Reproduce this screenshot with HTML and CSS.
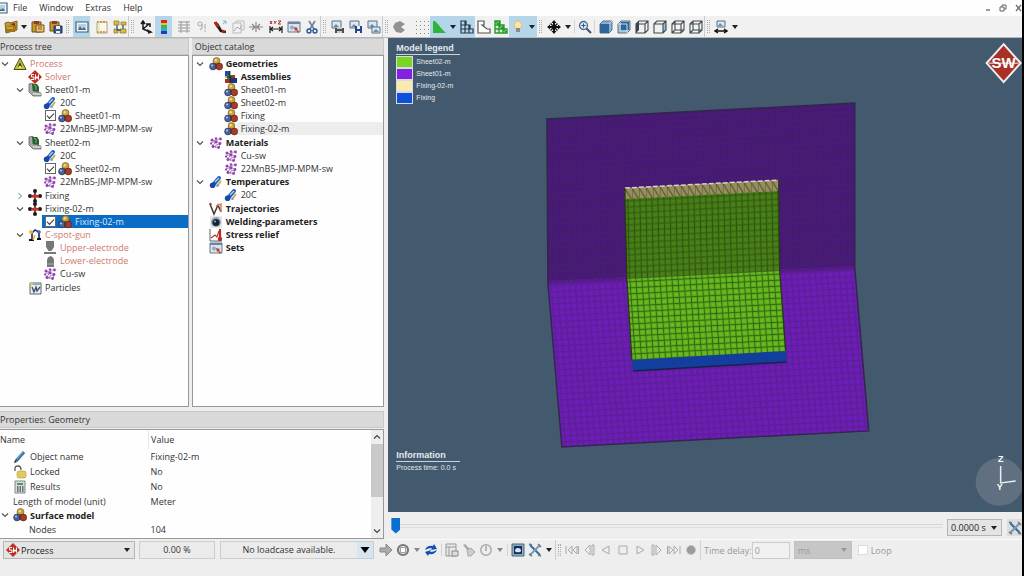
FILE: index.html
```html
<!DOCTYPE html>
<html lang="en">
<head>
<meta charset="utf-8">
<title>Process editor</title>
<link rel="stylesheet" href="styles.css">
</head>
<body>
<svg class="defs" aria-hidden="true">
  <symbol id="geo" viewBox="0 0 14 14"><circle cx="7.5" cy="4" r="3.5" fill="#c9a23a" stroke="#6d5520" stroke-width=".6"/><circle cx="4" cy="9.5" r="3.4" fill="#48629a" stroke="#222b50" stroke-width=".6"/><circle cx="10.3" cy="9.5" r="3.4" fill="#a93a28" stroke="#551a14" stroke-width=".6"/><circle cx="6.8" cy="3.2" r="1.2" fill="#f2dc8a"/><circle cx="3" cy="8.5" r="1.1" fill="#a9c3ec"/><path d="M7 6v6" stroke="#333" stroke-width=".8"/></symbol>
  <symbol id="mat" viewBox="0 0 14 14"><path d="M3 4l4 1 4-3M4 10l3-5 4 3-1 4-6-2-2-3 5-2M6 12l1-3 4-1" stroke="#8a6ba8" fill="none" stroke-width=".8"/><g fill="#9c3fb4"><circle cx="3" cy="4" r="1.5"/><circle cx="7" cy="2.6" r="1.3"/><circle cx="11.5" cy="3" r="1.4"/><circle cx="2" cy="7.5" r="1.1"/><circle cx="7" cy="6" r="1.5"/><circle cx="11" cy="7.5" r="1.4"/><circle cx="4" cy="10.5" r="1.5"/><circle cx="9.5" cy="11.5" r="1.4"/></g></symbol>
  <symbol id="temp" viewBox="0 0 14 14"><path d="M4 10L10 3" stroke="#1d58b5" stroke-width="4" stroke-linecap="round"/><circle cx="3.6" cy="10.3" r="2.8" fill="#174a9f"/><path d="M6 7l4-4" stroke="#a8d4f5" stroke-width="1.4"/><path d="M9 10l3-4" stroke="#dda93a" stroke-width="2"/><circle cx="8.5" cy="10.5" r="1.5" fill="#7ca3d9"/></symbol>
  <symbol id="fix" viewBox="0 0 14 14"><path d="M7 3v8M3 7h8" stroke="#1b1b1b" stroke-width="1.500"/><g fill="#1b1b1b"><circle cx="7" cy="2" r="2"/><circle cx="7" cy="12" r="2"/><circle cx="2" cy="7" r="2"/><circle cx="12" cy="7" r="2"/></g><path d="M3 7.500h8" stroke="#cc3322" stroke-width="2.200"/><circle cx="7" cy="7" r="2" fill="#cc3322"/></symbol>
  <symbol id="cross" viewBox="0 0 14 14"><path d="M7 0l2.500 3H8v3h3V4.500L14 7l-3 2.500V8H8v3h1.500L7 14l-2.500-3H6V8H3v1.500L0 7l3-2.500V6h3V3H4.500z" fill="#111"/><path d="M3.500 3.500l7 7M10.500 3.500l-7 7" stroke="#111" stroke-width="1.300"/></symbol>
  <symbol id="sheet" viewBox="0 0 14 14"><path d="M1 1l4-1v8l8 2v3H5L1 9z" fill="#a9aaa8" stroke="#555" stroke-width=".7"/><path d="M4 1h5l2 3v5l-6-1z" fill="#285e32"/><path d="M6 2l2 1v4" stroke="#77b86e" fill="none"/><path d="M5 11h8" stroke="#eee"/></symbol>
  <symbol id="warn" viewBox="0 0 14 14"><path d="M7 1l6 11.500H1z" fill="#bfc53a" stroke="#4a501b" stroke-width="1"/><path d="M7 5l2 5H5z" fill="#303812"/><circle cx="7" cy="10" r="1.300" fill="#eef06d"/></symbol>
  <symbol id="solver" viewBox="0 0 14 14"><path d="M7 0l7 7-7 7-7-7z" fill="#bd2f25"/><path d="M6 4.500H3.500V7H6v2.500H3M7.500 4.500V9.500l1.500-3 1.500 3V4.500" fill="none" stroke="#fff" stroke-width="1"/></symbol>
  <symbol id="gun" viewBox="0 0 14 14"><path d="M4 11V5l3-3 4 2v6" fill="none" stroke="#1b3477" stroke-width="1.700"/><circle cx="3" cy="4" r="2" fill="#e6bb32"/><path d="M1 12h5M9 11h4" stroke="#111" stroke-width="2"/><circle cx="11" cy="4" r="1.800" fill="#3f68b3"/><path d="M5 12l2-5" stroke="#e6bb32" stroke-width="1.500"/></symbol>
  <symbol id="elup" viewBox="0 0 14 14"><path d="M3 0h8v6L8.500 10h-3L3 6z" fill="#777"/><path d="M1 12h12" stroke="#777" stroke-width="2"/></symbol>
  <symbol id="ello" viewBox="0 0 14 14"><path d="M4 13V7q0-4 3.500-5Q11 3 11 7v6z" fill="#777"/><path d="M4 10h7" stroke="#bbb" stroke-width=".8"/></symbol>
  <symbol id="part" viewBox="0 0 14 14"><path d="M2 2h11v11H2z" fill="#e8eef3" stroke="#5c6570"/><path d="M3 3h9" stroke="#9aabb8" stroke-width="2"/><path d="M4 6l2 5 2-5 1 4 3-4" stroke="#354d68" fill="none" stroke-width="1.300"/><circle cx="3.500" cy="3" r="1.500" fill="#e1c65c"/></symbol>
  <symbol id="asm" viewBox="0 0 14 14"><path d="M1 1h5v5H1z" fill="#1f4aa5"/><path d="M3 5h5v5H3z" fill="#278d32"/><path d="M1 9h5v4H1zM8 5h3v4H8z" fill="#b02b22"/><path d="M6 8h7v5H6z" fill="#183879"/><path d="M1 7h7M6 1v12" stroke="#111" stroke-width=".7"/></symbol>
  <symbol id="traj" viewBox="0 0 14 14"><path d="M1 2l4 10 4-9 3 7" stroke="#493333" fill="none" stroke-width="1.500"/><path d="M7 4l5-2v8" stroke="#d77b62" fill="none" stroke-width="1.500"/><circle cx="1.500" cy="2" r="1.200" fill="#b0372b"/></symbol>
  <symbol id="weld" viewBox="0 0 14 14"><path d="M1 1h12v12H1z" fill="#e5e7e9"/><circle cx="7" cy="7" r="5" fill="#9aa4ad"/><circle cx="7" cy="7.500" r="3.600" fill="#172338"/><circle cx="6" cy="6.500" r="1" fill="#9bb4d1"/></symbol>
  <symbol id="stress" viewBox="0 0 14 14"><path d="M1 1v12h12" fill="none" stroke="#596173"/><path d="M2 10l4-3 2 2 2-6" stroke="#c03525" fill="none" stroke-width="1.200"/><path d="M11 1v9" stroke="#b52a23" stroke-width="2.200"/><circle cx="11" cy="11" r="2.200" fill="#b52a23"/></symbol>
  <symbol id="sets" viewBox="0 0 14 14"><path d="M1 2h12v10H1z" fill="#dbe4ec" stroke="#60788f"/><path d="M1 3h12" stroke="#6886a5" stroke-width="2"/><circle cx="5" cy="7.500" r="2" fill="#93abc2"/><path d="M7 7l4 1-1 1 2 3-1 1-2-3-1 1z" fill="#bf3d2c"/></symbol>
  <symbol id="pencil" viewBox="0 0 14 14"><path d="M3 11L11 2" stroke="#356f9e" stroke-width="3.200"/><path d="M4 9l6-7" stroke="#84bde2"/><path d="M1 13l1-3 2 2z" fill="#222"/></symbol>
  <symbol id="lock" viewBox="0 0 14 14"><path d="M2 6V3q0-2 3-2t3 4" fill="none" stroke="#555" stroke-width="1.300"/><rect x="4" y="6" width="9" height="7" rx="2" fill="#ddca62" stroke="#b69c37" stroke-width=".6"/></symbol>
  <symbol id="calc" viewBox="0 0 14 14"><path d="M2 1h10v12H2z" fill="#d8dfd9" stroke="#7c8882"/><path d="M4 3h6v2H4z" fill="#5c8a6d"/><path d="M4 7h1.500M6.500 7H8M9 7h1.500M4 9h1.500M6.500 9H8M9 9h1.500M4 11h1.500M6.500 11H8M9 11h1.500" stroke="#40546a" stroke-width="1.300"/></symbol>
  <symbol id="tick" viewBox="0 0 8 8"><path d="M1 2.500l3 3 3-3" fill="none" stroke="currentColor" stroke-width="1.200"/></symbol>
  <symbol id="tickr" viewBox="0 0 8 8"><path d="M2.500 1l3 3-3 3" fill="none" stroke="#aaa" stroke-width="1.200"/></symbol>
  <symbol id="tri" viewBox="0 0 8 8"><path d="M1 2h6L4 6z" fill="currentColor"/></symbol>
  <symbol id="folder" viewBox="0 0 14 14"><path d="M1 3l4-1 1 1 7-2v9l-11 3z" fill="#c69a27" stroke="#665016" stroke-width=".8"/><path d="M1 12l2-6 10-1-2 7z" fill="#a17818"/><path d="M6 4l5-1v3z" fill="#832d1c"/><path d="M3 8h6" stroke="#ead272"/></symbol>
  <symbol id="clip" viewBox="0 0 14 14"><path d="M1 2h9v10H1z" fill="#c69a27" stroke="#665016"/><path d="M3 1h5v3H3z" fill="#9a3a25"/><path d="M5 5h8v7H5z" fill="#e7c86b" stroke="#755018"/><path d="M7 7h4M7 9h4" stroke="#855"/></symbol>
  <symbol id="clips" viewBox="0 0 14 14"><path d="M1 2h9v9H1z" fill="#c69a27" stroke="#665016"/><path d="M3 1h5v3H3z" fill="#9a3a25"/><path d="M5 6h8v7H5z" fill="#37598a" stroke="#203558"/><path d="M7 6h4v3H7zM7 11h4v2H7z" fill="#e9eef5"/></symbol>
  <symbol id="pic" viewBox="0 0 14 14"><path d="M1 2h12v10H1z" fill="#eef4f8" stroke="#40627c" stroke-width="1.200"/><path d="M3 4h8v6H3z" fill="#b9d0e1"/><path d="M3 10l2-4 2 3 2-2 2 3z" fill="#466a88"/></symbol>
  <symbol id="note" viewBox="0 0 14 14"><path d="M2 2h10v11H2z" fill="#f9f7ee" stroke="#aaa391"/><path d="M2 2h10M2 12h10" stroke="#d79c3d" stroke-width="2" stroke-dasharray="2 1"/><path d="M4 2v10" stroke="#dda"/></symbol>
  <symbol id="tree" viewBox="0 0 14 14"><path d="M1 1h5v4H1zM8 2h5v3H8zM7 9h6v4H7zM1 9h4v4H1z" fill="#dfba36" stroke="#8b761f" stroke-width=".7"/><path d="M4 5v5h4M10 5v4" stroke="#2d5a83" fill="none" stroke-width="1.300"/></symbol>
  <symbol id="axes" viewBox="0 0 14 14"><path d="M4 2v7l7 3M4 9l6-5M2 4l2-3 2 3M8 10l4 2-3 1M7 4h4v3" fill="none" stroke="#1b1b1b" stroke-width="1.500"/></symbol>
  <symbol id="scale" viewBox="0 0 14 14"><path d="M4 0h6v3H4z" fill="#d22"/><path d="M4 3h6v2H4z" fill="#eec22c"/><path d="M4 5h6v3H4z" fill="#38b74c"/><path d="M4 8h6v3H4z" fill="#32a9cc"/><path d="M4 11h6v3H4z" fill="#253da5"/></symbol>
  <symbol id="lines" viewBox="0 0 14 14"><path d="M1 2h12M1 5h12M1 8h12M1 11h12M4 1v12M10 1v12" stroke="#999"/></symbol>
  <symbol id="nine" viewBox="0 0 14 14"><g fill="none" stroke="#b3b3b3" stroke-width="1.200"><circle cx="5" cy="4" r="2"/><path d="M7 4v4L5 10M10 4v5M9 11h2"/></g></symbol>
  <symbol id="torch" viewBox="0 0 14 14"><path d="M1 2l4 1 4 7 4 1v2L7 12 3 6z" fill="#1d1d1d"/><path d="M2 2l3 5M9 11l3 1" stroke="#b4231b" stroke-width="3"/><path d="M10 4l3-3M10 1h3v3" stroke="#7fb5dc" fill="none"/></symbol>
  <symbol id="chart" viewBox="0 0 14 14"><path d="M2 3h8v10H2zM5 3V1h8v9h-3" fill="none" stroke="#bbb"/><path d="M3 11l3-4 3 2 2-4" fill="none" stroke="#aaa"/></symbol>
  <symbol id="pin" viewBox="0 0 14 14"><path d="M0 7h14M7 2v10M3 4l3 3-3 3M11 4L8 7l3 3" fill="none" stroke="#888" stroke-width="1.200"/></symbol>
  <symbol id="xyz" viewBox="0 0 14 14"><path d="M1 6v7M13 6v7M1 9h12M4 7L1.500 9 4 11M10 7l2.500 2L10 11" fill="none" stroke="#222" stroke-width="1.200"/><path d="M1 1l2 3M3 1L1 4M5 1l1 1.500L7.500 1M6 2v2M9 1h3L9 4h3" stroke="#b22b28" fill="none"/></symbol>
  <symbol id="cut" viewBox="0 0 14 14"><path d="M4 1l5 8M10 1L5 9" stroke="#6b8299" stroke-width="1.600"/><circle cx="4" cy="11" r="2" fill="none" stroke="#245696" stroke-width="1.400"/><circle cx="10" cy="11" r="2" fill="none" stroke="#245696" stroke-width="1.400"/></symbol>
  <symbol id="pics" viewBox="0 0 14 14"><path d="M1 1h9v7H1z" fill="#dce7ef" stroke="#547087"/><path d="M2 7l3-3 3 3" fill="#6c8ba4"/><path d="M5 7h8v6H5z" fill="#dce7ef" stroke="#547087"/><path d="M6 12l3-3 3 3" fill="#6c8ba4"/></symbol>
  <symbol id="picprint" viewBox="0 0 14 14"><path d="M1 1h9v7H1z" fill="#dce7ef" stroke="#547087"/><path d="M2 7l3-3 3 3" fill="#6c8ba4"/><path d="M4 8h9v5H4z" fill="#484f50"/><path d="M6 7h5v2H6zM6 11h5v2H6z" fill="#c7cccb"/></symbol>
  <symbol id="picsave" viewBox="0 0 14 14"><path d="M1 1h9v7H1z" fill="#dce7ef" stroke="#547087"/><path d="M2 7l3-3 3 3" fill="#6c8ba4"/><path d="M6 6h7v7H6z" fill="#28468a"/><path d="M8 6h3v3H8zM8 11h3v2H8z" fill="#eef"/></symbol>
  <symbol id="ball" viewBox="0 0 14 14"><path d="M8 1L3 3 1 7l3 5 5 1 4-3-4-3 4-3z" fill="#929292"/></symbol>
  <symbol id="dots" viewBox="0 0 14 14"><path d="M1 1.500h13M1 5.500h13M1 9.500h13M1 13.500h13" stroke="#888" stroke-dasharray="1 3"/></symbol>
  <symbol id="hill" viewBox="0 0 14 14"><path d="M1 13V1h2l3 3 3 4 5 5z" fill="#2eb43a"/></symbol>
  <symbol id="grid" viewBox="0 0 14 14"><path d="M1 1h5v4h4v4h3v4H1zM1 5h5M1 9h9M5 1v12M9 5v8" fill="none" stroke="#273a48" stroke-width="1.200"/></symbol>
  <symbol id="outline" viewBox="0 0 14 14"><path d="M1 1h6v4H5l5 4h3v4H1z" fill="#fff" stroke="#555" stroke-width="1.200"/></symbol>
  <symbol id="ggrid" viewBox="0 0 14 14"><path d="M1 1h5v4h4v4h3v4H1z" fill="#d9f0d7"/><path d="M1 1h5v4h4v4h3v4H1zM1 5h5M1 9h9M5 1v12M9 5v8M1 1l12 12" fill="none" stroke="#259a2c" stroke-width="1.400"/></symbol>
  <symbol id="bulb" viewBox="0 0 14 14"><circle cx="7" cy="5" r="4" fill="#f4e7a8" stroke="#cbb66c" stroke-width=".7"/><path d="M5 8h4v4H5z" fill="#8f8980"/></symbol>
  <symbol id="zoom" viewBox="0 0 14 14"><circle cx="5.500" cy="5.500" r="4" fill="#d7e7f4" stroke="#4d6d8c" stroke-width="1.300"/><path d="M8.500 8.500l4.500 4.500" stroke="#405970" stroke-width="2.200"/><path d="M3.500 5.500h4M5.500 3.500v4" stroke="#27558a"/></symbol>
  <symbol id="cubea" viewBox="0 0 14 14"><path d="M1 4l3-3h9v9l-3 3H1z" fill="#86b1d4" stroke="#5d7181"/><path d="M1 4h9v9H1z" fill="#2d6499"/><path d="M10 4l3-3" stroke="#ddd"/></symbol>
  <symbol id="cubeb" viewBox="0 0 14 14"><path d="M1 4l3-3h9v9l-3 3H1z" fill="#a7c4da" stroke="#5d7181"/><path d="M4 2h8v8H4z" fill="#2d6499"/><path d="M1 4h9v9" fill="none" stroke="#cde"/></symbol>
  <symbol id="cube" viewBox="0 0 14 14"><path d="M1 4l3-3h9v9l-3 3H1zM1 4h9v9M10 4l3-3M4 1v9h9M1 13l3-3" fill="#f5f7f8" fill-opacity=".7" stroke="#3f484d" stroke-width="1.100"/></symbol>
  <symbol id="cubel" viewBox="0 0 14 14"><path d="M1 4l3-3v9l-3 3z" fill="#345"/><path d="M1 4l3-3h9v9l-3 3H1zM1 4h9v9M10 4l3-3" fill="none" stroke="#3f484d" stroke-width="1.100"/></symbol>
  <symbol id="cuber" viewBox="0 0 14 14"><path d="M10 4l3-3v9l-3 3z" fill="#91bddd"/><path d="M1 4l3-3h9v9l-3 3H1zM1 4h9v9M10 4l3-3" fill="none" stroke="#3f484d" stroke-width="1.100"/></symbol>
  <symbol id="measure" viewBox="0 0 14 14"><path d="M3 1h8v6H3z" fill="#dce7ef" stroke="#547087"/><path d="M4 6l2-3 3 3" fill="#6c8ba4"/><path d="M1 11h12M4 9l-3 2 3 2M10 9l3 2-3 2" stroke="#111" fill="none" stroke-width="1.400"/></symbol>
  <symbol id="go" viewBox="0 0 14 14"><path d="M1 5h6V1l6 6-6 6V9H1z" fill="#aaa" stroke="#888"/></symbol>
  <symbol id="halt" viewBox="0 0 14 14"><circle cx="7" cy="7" r="5" fill="#eee" stroke="#777" stroke-width="2.200"/><path d="M4.500 4.500h5v5h-5z" fill="#fff" stroke="#888" stroke-width=".8"/></symbol>
  <symbol id="sync" viewBox="0 0 14 14"><path d="M1 7q2-5 8-4l1-2 3 5-6 1 1-2Q4 5 1 7zM13 7q-2 5-8 4l-1 2-3-4 6-2-1 2q4 0 7-2z" fill="#164db0"/></symbol>
  <symbol id="form" viewBox="0 0 14 14"><path d="M1 1h10v12H1zM1 4h10M4 4v9" fill="#e8e8e8" stroke="#999"/><path d="M7 8h6v5H7z" fill="#ddd" stroke="#888"/></symbol>
  <symbol id="brush" viewBox="0 0 14 14"><path d="M1 2l2-1 5 5-2 2z" fill="#aaa"/><path d="M5 7l4-2 4 4-4 4H6z" fill="#ccc" stroke="#aaa"/></symbol>
  <symbol id="clock" viewBox="0 0 14 14"><circle cx="7" cy="7" r="5.200" fill="none" stroke="#aaa" stroke-width="1.500"/><path d="M7 3v5" stroke="#999" stroke-width="1.300"/></symbol>
  <symbol id="screen" viewBox="0 0 14 14"><path d="M1 1h12v12H1z" fill="#8fabc0" stroke="#49667c"/><path d="M3 3h8v8H3z" fill="#0f315d"/><path d="M4 8q0-3 3-3 3 0 3 3-1 2-3 1-2 1-3-1" fill="#d9e7f0"/></symbol>
  <symbol id="tools" viewBox="0 0 14 14"><path d="M2 2l10 10" stroke="#37699d" stroke-width="2"/><path d="M12 2L2 12" stroke="#7d99b0" stroke-width="2"/><path d="M1 1l3 1M10 1l3 3M1 11l3 2M10 12l3 1" stroke="#667f93" stroke-width="1.600"/></symbol>
  <symbol id="first" viewBox="0 0 14 14"><path d="M1 3v8M7 3L3 7l4 4zM12 3L8 7l4 4zM13.500 3v8" fill="none" stroke="#aaa"/></symbol>
  <symbol id="last" viewBox="0 0 14 14"><path d="M13 3v8M7 3l4 4-4 4zM2 3l4 4-4 4zM.5 3v8" fill="none" stroke="#aaa"/></symbol>
  <symbol id="stepb" viewBox="0 0 14 14"><path d="M8 2L3 7l5 5zM10 2h2v10h-2z" fill="none" stroke="#aaa"/></symbol>
  <symbol id="stepf" viewBox="0 0 14 14"><path d="M6 2l5 5-5 5zM2 2h2v10H2z" fill="none" stroke="#aaa"/></symbol>
  <symbol id="back" viewBox="0 0 14 14"><path d="M10 3L3 7l7 4z" fill="none" stroke="#aaa"/></symbol>
  <symbol id="play" viewBox="0 0 14 14"><path d="M4 3l7 4-7 4z" fill="none" stroke="#aaa"/></symbol>
  <symbol id="stop" viewBox="0 0 14 14"><path d="M3 3h8v8H3z" fill="none" stroke="#aaa"/></symbol>
  <symbol id="rec" viewBox="0 0 14 14"><circle cx="7" cy="7" r="4.500" fill="#9b9b9b" stroke="#c5c5c5"/></symbol>
</svg>

<div class="app">
  <header class="menubar">
    <svg class="ico"><use href="#pic"/></svg>
    <nav class="menus"><button>File</button><button>Window</button><button>Extras</button><button>Help</button></nav>
    <div class="winbtns">
      <button aria-label="Minimize"><svg viewBox="0 0 8 8"><path d="M2 6h4" stroke="#666" stroke-width="1.300"/></svg></button>
      <button aria-label="Restore"><svg viewBox="0 0 8 8"><path d="M1 3h4v4H1zM3 3V1h4v4H5" fill="none" stroke="#666"/></svg></button>
      <button aria-label="Close"><svg viewBox="0 0 8 8"><path d="M2 1l5 6M7 1L2 7" stroke="#666" stroke-width="1.200"/></svg></button>
    </div>
  </header>

  <div class="toolbar" role="toolbar" aria-label="Main tools">
    <div class="group wide first">
      <button class="tb" aria-label="Open"><svg class="ico"><use href="#folder"/></svg></button><button class="dd" aria-label="Open menu"><svg><use href="#tri"/></svg></button>
      <button class="tb" aria-label="Import"><svg class="ico"><use href="#clip"/></svg></button><button class="tb" aria-label="Save"><svg class="ico"><use href="#clips"/></svg></button>
    </div>
    <div class="group wide grip">
      <button class="tb on" aria-label="Picture"><svg class="ico"><use href="#pic"/></svg></button><i class="space"></i>
      <button class="tb" aria-label="Notes"><svg class="ico"><use href="#note"/></svg></button><button class="tb" aria-label="Structure"><svg class="ico"><use href="#tree"/></svg></button>
    </div>
    <div class="group wide grip bar">
      <button class="tb" aria-label="Axes"><svg class="ico"><use href="#axes"/></svg></button><button class="tb on" aria-label="Colour scale"><svg class="ico"><use href="#scale"/></svg></button><i class="space"></i>
      <button class="tb" aria-label="Lines"><svg class="ico"><use href="#lines"/></svg></button><button class="tb" aria-label="Numbers"><svg class="ico"><use href="#nine"/></svg></button>
      <button class="tb" aria-label="Torch"><svg class="ico"><use href="#torch"/></svg></button><button class="tb" aria-label="Chart"><svg class="ico"><use href="#chart"/></svg></button>
      <button class="tb" aria-label="Pin"><svg class="ico"><use href="#pin"/></svg></button><i class="space"></i>
      <button class="tb" aria-label="Coordinates"><svg class="ico"><use href="#xyz"/></svg></button><button class="tb" aria-label="Select"><svg class="ico"><use href="#sets"/></svg></button><button class="tb" aria-label="Cut"><svg class="ico"><use href="#cut"/></svg></button>
    </div>
    <div class="group wide grip bar">
      <button class="tb" aria-label="Print view"><svg class="ico"><use href="#picprint"/></svg></button><button class="tb" aria-label="Save view"><svg class="ico"><use href="#picsave"/></svg></button><button class="tb" aria-label="Copy view"><svg class="ico"><use href="#pics"/></svg></button>
    </div>
    <div class="group grip bar">
      <button class="tb" aria-label="Solid"><svg class="ico"><use href="#ball"/></svg></button><i class="space far"></i>
      <button class="tb" aria-label="Points"><svg class="ico"><use href="#dots"/></svg></button>
      <button class="tb on" aria-label="Surface"><svg class="ico"><use href="#hill"/></svg></button><button class="dd on" aria-label="Surface menu"><svg><use href="#tri"/></svg></button>
      <button class="tb on" aria-label="Mesh"><svg class="ico"><use href="#grid"/></svg></button><button class="tb" aria-label="Outline"><svg class="ico"><use href="#outline"/></svg></button><button class="tb" aria-label="Elements"><svg class="ico"><use href="#ggrid"/></svg></button>
      <button class="tb on" aria-label="Light"><svg class="ico"><use href="#bulb"/></svg></button><button class="dd on" aria-label="Light menu"><svg><use href="#tri"/></svg></button>
    </div>
    <div class="group grip">
      <button class="tb" aria-label="Move"><svg class="ico"><use href="#cross"/></svg></button><button class="dd" aria-label="Move menu"><svg><use href="#tri"/></svg></button>
    </div>
    <div class="group line"><button class="tb" aria-label="Zoom"><svg class="ico"><use href="#zoom"/></svg></button></div>
    <div class="group wide line">
      <button class="tb" aria-label="Front view"><svg class="ico"><use href="#cubea"/></svg></button><button class="tb" aria-label="Back view"><svg class="ico"><use href="#cubeb"/></svg></button><button class="tb" aria-label="Left view"><svg class="ico"><use href="#cubel"/></svg></button><button class="tb" aria-label="Right view"><svg class="ico"><use href="#cuber"/></svg></button><button class="tb" aria-label="Top view"><svg class="ico"><use href="#cube"/></svg></button><button class="tb" aria-label="Bottom view"><svg class="ico"><use href="#cube"/></svg></button>
    </div>
    <div class="group grip bar"><button class="tb" aria-label="Measure"><svg class="ico"><use href="#measure"/></svg></button><button class="dd" aria-label="Measure menu"><svg><use href="#tri"/></svg></button></div>
  </div>

  <main class="work">
    <div class="side">
      <div class="panes">
        <section class="pane">
          <h2>Process tree</h2>
          <div class="box">
            <ul class="tree">
              <li><div class="row"><button class="tw" aria-label="Toggle"><svg><use href="#tick"/></svg></button><span class="item err"><svg class="ico"><use href="#warn"/></svg>Process</span></div>
                <ul>
                  <li><div class="row"><i class="tw"></i><span class="item err"><svg class="ico"><use href="#solver"/></svg>Solver</span></div></li>
                  <li><div class="row"><button class="tw" aria-label="Toggle"><svg><use href="#tick"/></svg></button><span class="item"><svg class="ico"><use href="#sheet"/></svg>Sheet01-m</span></div>
                    <ul>
                      <li><div class="row"><i class="tw"></i><span class="item"><svg class="ico"><use href="#temp"/></svg>20C</span></div></li>
                      <li><div class="row"><i class="tw"></i><label class="item"><input type="checkbox" checked><svg class="ico"><use href="#geo"/></svg>Sheet01-m</label></div></li>
                      <li><div class="row"><i class="tw"></i><span class="item"><svg class="ico"><use href="#mat"/></svg>22MnB5-JMP-MPM-sw</span></div></li>
                    </ul></li>
                  <li class="part"><div class="row"><button class="tw" aria-label="Toggle"><svg><use href="#tick"/></svg></button><span class="item"><svg class="ico"><use href="#sheet"/></svg>Sheet02-m</span></div>
                    <ul>
                      <li><div class="row"><i class="tw"></i><span class="item"><svg class="ico"><use href="#temp"/></svg>20C</span></div></li>
                      <li><div class="row"><i class="tw"></i><label class="item"><input type="checkbox" checked><svg class="ico"><use href="#geo"/></svg>Sheet02-m</label></div></li>
                      <li><div class="row"><i class="tw"></i><span class="item"><svg class="ico"><use href="#mat"/></svg>22MnB5-JMP-MPM-sw</span></div></li>
                    </ul></li>
                  <li class="part"><div class="row"><button class="tw" aria-label="Toggle"><svg><use href="#tickr"/></svg></button><span class="item"><svg class="ico"><use href="#fix"/></svg>Fixing</span></div></li>
                  <li><div class="row"><button class="tw" aria-label="Toggle"><svg><use href="#tick"/></svg></button><span class="item"><svg class="ico"><use href="#fix"/></svg>Fixing-02-m</span></div>
                    <ul><li><div class="row"><i class="tw"></i><label class="item sel"><input type="checkbox" checked><svg class="ico"><use href="#geo"/></svg>Fixing-02-m</label></div></li></ul></li>
                  <li><div class="row"><button class="tw" aria-label="Toggle"><svg><use href="#tick"/></svg></button><span class="item err"><svg class="ico"><use href="#gun"/></svg>C-spot-gun</span></div>
                    <ul>
                      <li><div class="row"><i class="tw"></i><span class="item err"><svg class="ico"><use href="#elup"/></svg>Upper-electrode</span></div></li>
                      <li><div class="row"><i class="tw"></i><span class="item err"><svg class="ico"><use href="#ello"/></svg>Lower-electrode</span></div></li>
                      <li><div class="row"><i class="tw"></i><span class="item"><svg class="ico"><use href="#mat"/></svg>Cu-sw</span></div></li>
                    </ul></li>
                  <li class="part"><div class="row"><i class="tw"></i><span class="item"><svg class="ico"><use href="#part"/></svg>Particles</span></div></li>
                </ul></li>
            </ul>
          </div>
        </section>
        <section class="pane">
          <h2>Object catalog</h2>
          <div class="box catalog">
            <ul class="tree">
              <li><div class="row"><button class="tw" aria-label="Toggle"><svg><use href="#tick"/></svg></button><b class="item"><svg class="ico"><use href="#geo"/></svg>Geometries</b></div>
                <ul>
                  <li><div class="row"><i class="tw"></i><b class="item"><svg class="ico"><use href="#asm"/></svg>Assemblies</b></div></li>
                  <li><div class="row"><i class="tw"></i><span class="item"><svg class="ico"><use href="#geo"/></svg>Sheet01-m</span></div></li>
                  <li><div class="row"><i class="tw"></i><span class="item"><svg class="ico"><use href="#geo"/></svg>Sheet02-m</span></div></li>
                  <li><div class="row"><i class="tw"></i><span class="item"><svg class="ico"><use href="#geo"/></svg>Fixing</span></div></li>
                  <li><div class="row"><i class="tw"></i><span class="item cur"><svg class="ico"><use href="#geo"/></svg>Fixing-02-m</span></div></li>
                </ul></li>
              <li class="part"><div class="row"><button class="tw" aria-label="Toggle"><svg><use href="#tick"/></svg></button><b class="item"><svg class="ico"><use href="#mat"/></svg>Materials</b></div>
                <ul>
                  <li><div class="row"><i class="tw"></i><span class="item"><svg class="ico"><use href="#mat"/></svg>Cu-sw</span></div></li>
                  <li><div class="row"><i class="tw"></i><span class="item"><svg class="ico"><use href="#mat"/></svg>22MnB5-JMP-MPM-sw</span></div></li>
                </ul></li>
              <li><div class="row"><button class="tw" aria-label="Toggle"><svg><use href="#tick"/></svg></button><b class="item"><svg class="ico"><use href="#temp"/></svg>Temperatures</b></div>
                <ul><li><div class="row"><i class="tw"></i><span class="item"><svg class="ico"><use href="#temp"/></svg>20C</span></div></li></ul></li>
              <li class="part"><div class="row"><i class="tw"></i><b class="item"><svg class="ico"><use href="#traj"/></svg>Trajectories</b></div></li>
              <li><div class="row"><i class="tw"></i><b class="item"><svg class="ico"><use href="#weld"/></svg>Welding-parameters</b></div></li>
              <li><div class="row"><i class="tw"></i><b class="item"><svg class="ico"><use href="#stress"/></svg>Stress relief</b></div></li>
              <li><div class="row"><i class="tw"></i><b class="item"><svg class="ico"><use href="#sets"/></svg>Sets</b></div></li>
            </ul>
          </div>
        </section>
      </div>
      <section class="pane props">
        <h2>Properties: Geometry</h2>
        <div class="box proprow">
          <table>
            <thead><tr><th>Name</th><th>Value</th></tr></thead>
            <tbody>
              <tr><td><span class="item pi"><svg class="ico"><use href="#pencil"/></svg>Object name</span></td><td>Fixing-02-m</td></tr>
              <tr><td><span class="item pi"><svg class="ico"><use href="#lock"/></svg>Locked</span></td><td>No</td></tr>
              <tr><td><span class="item pi"><svg class="ico"><use href="#calc"/></svg>Results</span></td><td>No</td></tr>
              <tr class="plain"><td><span class="item pi">Length of model (unit)</span></td><td>Meter</td></tr>
              <tr class="plain"><td><span class="row"><button class="tw" aria-label="Toggle"><svg><use href="#tick"/></svg></button><b class="item"><svg class="ico"><use href="#geo"/></svg>Surface model</b></span></td><td></td></tr>
              <tr class="plain"><td><span class="item deep">Nodes</span></td><td>104</td></tr>
            </tbody>
          </table>
          <div class="scroll">
            <button aria-label="Scroll up"><svg class="up"><use href="#tick"/></svg></button>
            <div class="track"><div class="thumb"></div></div>
            <button aria-label="Scroll down"><svg><use href="#tick"/></svg></button>
          </div>
        </div>
      </section>
    </div>

    <div class="stage">
      <div class="view">
        <svg class="scene" viewBox="388 38 634 474" role="img" aria-label="Meshed model">
          <defs>
            <linearGradient id="fold" x1="0" y1="0" x2=".05" y2="1"><stop offset="0" stop-color="#49157f"/><stop offset=".45" stop-color="#49157f"/><stop offset=".52" stop-color="#6a1cb2"/><stop offset="1" stop-color="#6f1cba"/></linearGradient>
            <pattern id="pu" width="6" height="6" patternUnits="userSpaceOnUse" patternTransform="matrix(1 -.052 .003 1 547 119)"><path d="M0 3H6M3 0V6" stroke="#432263" stroke-width="1.500"/></pattern>
            <pattern id="pl" width="6" height="6" patternUnits="userSpaceOnUse" patternTransform="matrix(1 -.052 .09 1 548 283)"><path d="M0 3H6M3 0V6" stroke="#5a2094" stroke-width="1.500"/></pattern>
            <pattern id="gu" width="6" height="6" patternUnits="userSpaceOnUse" patternTransform="matrix(1 -.052 .02 1 625 198)"><path d="M0 3H6M3 0V6" stroke="#2d5512" stroke-width="1.200"/></pattern>
            <pattern id="gl" width="6" height="6" patternUnits="userSpaceOnUse" patternTransform="matrix(1 -.052 .07 1 627 279)"><path d="M0 3H6M3 0V6" stroke="#336a12" stroke-width="1.200"/></pattern>
            <pattern id="tn" width="7" height="12" patternUnits="userSpaceOnUse" patternTransform="matrix(1 -.052 0 1 625 188)"><path d="M0 0V12M0 0L7 12" stroke="#544d2a" stroke-width="1"/></pattern>
          </defs>
          <path d="M547 119L855 103V268L869 431 562 447 548 283z" fill="#6f1cba"/>
          <path d="M547 119L855 103V266L548 281z" fill="#49157f"/><path d="M548 281L855 266V270L548 285z" fill="#5b1998"/>
          <path d="M547 119L855 103V268L548 283z" fill="url(#pu)"/>
          <path d="M548 283L855 268 869 431 562 447z" fill="url(#pl)"/>
          <path d="M547 119L855 103V268L869 431 562 447 548 283z" fill="none" stroke="#33264e" stroke-width="1.500"/>
          <path d="M625 197L779 189 780 271 627 279z" fill="#497f17"/><path d="M625 197L779 189 780 271 627 279z" fill="url(#gu)"/>
          <path d="M627 279L780 271 786 352 632 360z" fill="#68b91f"/><path d="M627 279L780 271 786 352 632 360z" fill="url(#gl)"/>
          <path d="M625 188L779 180V191L625 199z" fill="#968f5f"/><path d="M625 188L779 180V191L625 199z" fill="url(#tn)"/>
          <path d="M625 188L779 180" stroke="#d9cfc4" stroke-width="1.500" stroke-dasharray="5 2"/>
          <path d="M632 360L786 351 787 362 633 371z" fill="#123f9d"/><path d="M633 371L787 362" stroke="#1c2050" stroke-width="1.500"/>
          <path d="M625 188V199L627 279 632 360M779 180V191L780 271 786 351" fill="none" stroke="#29361a" stroke-width="1.300"/>
          <path d="M1004 44l17 19-17 19-17-19z" fill="#a92f27" stroke="#f0eef0" stroke-width="2"/>
          <path d="M989 63h30" stroke="#f0eef0"/>
          <text x="1004" y="68" class="logo" text-anchor="middle">SW</text>
          <circle cx="1000" cy="482" r="24" fill="#607080"/>
          <path d="M1001 466V483L1016 481" stroke="#e8edf0" fill="none" stroke-width="1.500"/>
          <text x="1001" y="462" class="axis" text-anchor="middle">Z</text><text x="1000" y="490" class="axis" text-anchor="middle">Y</text>
        </svg>
        <div class="legend">
          <h3>Model legend</h3>
          <ul><li><i class="sw green"></i>Sheet02-m</li><li><i class="sw violet"></i>Sheet01-m</li><li><i class="sw cream"></i>Fixing-02-m</li><li><i class="sw blue"></i>Fixing</li></ul>
        </div>
        <div class="info"><h3>Information</h3><p>Process time: 0.0 s</p></div>
      </div>
      <div class="timeline">
        <input type="range" min="0" max="100" value="0" aria-label="Time">
        <span class="pick time"><select aria-label="Time step"><option>0.0000 s</option></select><svg><use href="#tri"/></svg></span>
        <button class="opt" aria-label="Time options"><svg class="ico"><use href="#tools"/></svg></button>
      </div>
    </div>
  </main>

  <footer class="bottom">
    <span class="pick proc"><svg class="ico lead"><use href="#solver"/></svg><select aria-label="Mode"><option>Process</option></select><svg><use href="#tri"/></svg></span>
    <output class="pct">0.00 %</output>
    <div class="load"><span>No loadcase available.</span><button aria-label="Choose loadcase"><svg><use href="#tri"/></svg></button></div>
    <div class="group">
      <button class="tb" aria-label="Run"><svg class="ico"><use href="#go"/></svg></button><button class="tb" aria-label="Halt"><svg class="ico"><use href="#halt"/></svg></button><button class="dd dim" aria-label="Halt menu"><svg><use href="#tri"/></svg></button><button class="tb" aria-label="Refresh"><svg class="ico"><use href="#sync"/></svg></button>
    </div>
    <div class="group line">
      <button class="tb" aria-label="Report"><svg class="ico"><use href="#form"/></svg></button><button class="tb" aria-label="Clean"><svg class="ico"><use href="#brush"/></svg></button><button class="tb" aria-label="Schedule"><svg class="ico"><use href="#clock"/></svg></button><button class="dd dim" aria-label="Schedule menu"><svg><use href="#tri"/></svg></button>
    </div>
    <div class="group line">
      <button class="tb" aria-label="Monitor"><svg class="ico"><use href="#screen"/></svg></button><button class="tb" aria-label="Settings"><svg class="ico"><use href="#tools"/></svg></button><button class="dd" aria-label="Settings menu"><svg><use href="#tri"/></svg></button>
    </div>
    <div class="group grip bar">
      <button class="tb" aria-label="First"><svg class="ico"><use href="#first"/></svg></button><button class="tb" aria-label="Step back"><svg class="ico"><use href="#stepb"/></svg></button><button class="tb" aria-label="Play back"><svg class="ico"><use href="#back"/></svg></button><button class="tb" aria-label="Stop"><svg class="ico"><use href="#stop"/></svg></button><button class="tb" aria-label="Play"><svg class="ico"><use href="#play"/></svg></button><button class="tb" aria-label="Step forward"><svg class="ico"><use href="#stepf"/></svg></button><button class="tb" aria-label="Last"><svg class="ico"><use href="#last"/></svg></button><button class="tb" aria-label="Record"><svg class="ico"><use href="#rec"/></svg></button>
    </div>
    <label class="delay">Time delay:<input type="text" value="0" disabled></label>
    <span class="pick unit"><select aria-label="Unit" disabled><option>ms</option></select><svg><use href="#tri"/></svg></span>
    <label class="loop"><input type="checkbox" disabled>Loop</label>
  </footer>
</div>
</body>
</html>
```

FILE: styles.css
```css
*, *::before { box-sizing: border-box; }
body { margin: 0; background: #eee; color: #333; font: 9px/13px "Open Sans", "Noto Sans", sans-serif; }
h2, h3, p, ul { margin: 0; padding: 0; font-weight: 400; }
ul { list-style: none; }
button, input, select { font: inherit; color: inherit; margin: 0; }
button { padding: 0; border: 0; background: none; display: flex; align-items: center; justify-content: center; }
svg { display: block; flex: none; width: 8px; height: 8px; }
.defs { position: absolute; width: 0; height: 0; }
.ico { width: 14px; height: 14px; }

.app { height: 100vh; display: flex; flex-direction: column; border-right: 2px solid #000; overflow: hidden; }

.menubar { flex: none; height: 16px; display: flex; align-items: center; background: #fefefe; padding-bottom: 1px; overflow: hidden; }
.menubar > .ico { margin-left: -6px; }
.menus { display: flex; gap: 12px; margin-left: 5px; }
.winbtns { margin-left: auto; display: flex; gap: 6px; }
.winbtns button { width: 9px; }

.toolbar { flex: none; height: 22px; display: flex; align-items: stretch; background: #f1f1f1; border-bottom: 1px solid #b8b8b8; }
.group { display: flex; align-items: stretch; flex: none; }
.group.wide { gap: 1px; }
.first { padding-left: 2px; }
.space { width: 1px; flex: none; }
.far { width: 6px; }
.tb { width: 17px; }
.dd { width: 11px; color: #222; }
.dim { color: #888; }
.on { background: #b5d6ea; }
.wide .dd { width: 8px; }
.grip::before { content: ""; width: 3px; margin: 4px 3px 4px 2px; border-left: 1px dotted #aaa; border-right: 1px dotted #aaa; }
.bar { border-left: 1px solid #ccc; }
.bar.grip::before { margin-right: 2px; }
.line::before { content: ""; width: 1px; margin: 4px 1px; background: #d4d4d4; }

.work { flex: 1; min-height: 0; display: grid; grid-template-columns: 38% 1fr; }
.side { display: flex; flex-direction: column; gap: 4px; padding-right: 4px; min-height: 0; }
.panes { flex: 1; min-height: 0; display: grid; grid-template-columns: 189fr 193fr; gap: 3px; }
.pane { display: flex; flex-direction: column; min-width: 0; }
.pane h2 { font-size: 9px; line-height: 15px; height: 17px; background: #d9d9d9; border: 1px solid #c8c8c8; border-width: 1px 1px 1px 0; white-space: nowrap; }
.panes .pane:last-child h2 { padding-left: 3px; }
.box { flex: 1; min-height: 0; background: #fefefe; border: 1px solid #999; border-left: 0; overflow: hidden; }
.catalog { border-left: 1px solid #999; padding-left: 3px; }
.tree { padding-top: 1px; }
.tree ul { padding-left: 15px; }
.part { margin-top: 1px; }
.row { display: flex; height: 13px; align-items: stretch; }
.tw { width: 12px; flex: none; padding-right: 3px; color: #555; }
.item { flex: 1; display: flex; align-items: center; gap: 3px; padding-left: 1px; white-space: nowrap; }
.err { color: #d0786e; }
.sel { background: #0a6cc4; color: #d6ebff; }
.cur { background: linear-gradient(90deg, transparent 14px, #ededed 14px); }
b { color: #222; }
input[type="checkbox"] { appearance: none; width: 11px; height: 11px; flex: none; display: grid; place-items: center; background: #fff; border: 1px solid #666; }
input[type="checkbox"]:checked::before { content: ""; width: 7px; height: 4px; margin-bottom: 2px; border: solid #333; border-width: 0 0 1px 1px; transform: rotate(-45deg); }
.item input { margin-left: 2px; }
.item input + .ico { margin-left: -1px; }

.props { flex: none; padding-bottom: 1px; }
.props h2 { margin-bottom: 1px; }
.proprow { display: flex; }
table { flex: 1; align-self: flex-start; border-collapse: collapse; table-layout: fixed; margin-bottom: 2px; }
th, td { padding: 0; text-align: left; font-weight: 400; height: 15px; line-height: 13px; }
th { height: 19px; }
th:first-child { width: 40%; }
th:last-child { border-left: 1px solid #e8e8e8; padding-left: 2px; }
td:last-child { padding-left: 2px; }
.plain td { height: 14px; }
.pi { padding-left: 13px; }
.deep { padding-left: 29px; }
.scroll { width: 12px; display: flex; flex-direction: column; background: #eee; color: #444; }
.scroll button { height: 14px; }
.up { transform: rotate(180deg); }
.track { flex: 1; }
.thumb { height: 66%; background: #c9c9c9; }

.stage { display: flex; flex-direction: column; min-width: 0; min-height: 0; }
.view { flex: 1; min-height: 0; position: relative; background: #43596e; color: #e4e9ee; font: 7px/12px "Liberation Sans", Arial, sans-serif; }
.scene { width: 100%; height: 100%; }
.logo { font: bold 15px "Liberation Sans", Arial, sans-serif; fill: #fff; }
.axis { font: bold 9px "Liberation Sans", Arial, sans-serif; fill: #fff; }
.legend { position: absolute; left: 8px; top: 4px; }
.info { position: absolute; left: 8px; bottom: 38px; }
.view h3 { font-size: 9px; line-height: 12px; font-weight: 700; border-bottom: 1px solid #cbd3da; width: 64px; white-space: nowrap; }
.legend ul { padding-top: 1px; }
.legend li { display: flex; gap: 3px; height: 12px; line-height: 11px; }
.sw { width: 17px; height: 12px; border: 1px solid #d8d8e8; }
.green { background: #78d620; }
.violet { background: #8420df; }
.cream { background: #f8ebad; }
.blue { background: #0c50dc; }

.timeline { flex: none; height: 28px; display: flex; align-items: center; background: #eee; border-bottom: 1px solid #fafafa; }
.timeline input { appearance: none; flex: 1; height: 20px; margin: 0 4px 0 3px; background: linear-gradient(#d5d5d5, #d5d5d5) 0 8px / 100% 1px no-repeat, linear-gradient(#dedede, #dedede) 0 11px / 100% 1px no-repeat; }
.timeline input::-webkit-slider-thumb { appearance: none; width: 9px; height: 16px; background: #0a6fce; clip-path: polygon(0 0, 100% 0, 100% 75%, 50% 100%, 0 75%); }
.pick { position: relative; display: flex; align-items: center; background: #e4e4e4; border: 1px solid #b5b5b5; color: #222; }
.pick select { appearance: none; flex: 1; min-width: 0; height: 100%; border: 0; padding: 0 12px 0 3px; background: none; border-radius: 0; opacity: 1; }
.pick > svg:last-child { position: absolute; right: 3px; pointer-events: none; }
.time { width: 55px; height: 17px; margin-top: 4px; }
.opt { width: 15px; height: 17px; margin: 4px 0 0 5px; background: #ddd; overflow: hidden; }

.bottom { flex: none; height: 36px; padding: 0 0 16px 3px; display: flex; align-items: stretch; background: #eee; }
.proc { width: 132px; margin: 1px 4px 1px 0; }
.proc .lead { margin-left: 2px; }
.proc select { padding-left: 1px; }
.pct { width: 76px; margin: 1px 5px 1px 0; border: 1px solid #ccc; text-align: center; line-height: 16px; background: #ebebeb; }
.load { width: 154px; margin: 1px 3px 1px 0; display: flex; border: 1px solid #ccc; text-align: center; line-height: 16px; background: #ebebeb; }
.load span { flex: 1; }
.load button { width: 16px; background: #d6e6f0; color: #000; }
.load svg { width: 12px; height: 12px; }
.bottom .group { margin-right: 1px; }
.delay, .loop { display: flex; align-items: center; color: #999; white-space: nowrap; }
.delay { border-left: 1px solid #d4d4d4; padding-left: 3px; }
.delay input { width: 38px; height: 17px; padding: 0 2px; border: 1px solid #ccc; background: #f1f1f1; }
.unit { width: 58px; margin: 1px 6px 1px 4px; background: #c6c6c6; border-color: #c0c0c0; color: #999; }
.loop { gap: 3px; }
.loop input { width: 10px; height: 10px; border-color: #ddd; }
```
